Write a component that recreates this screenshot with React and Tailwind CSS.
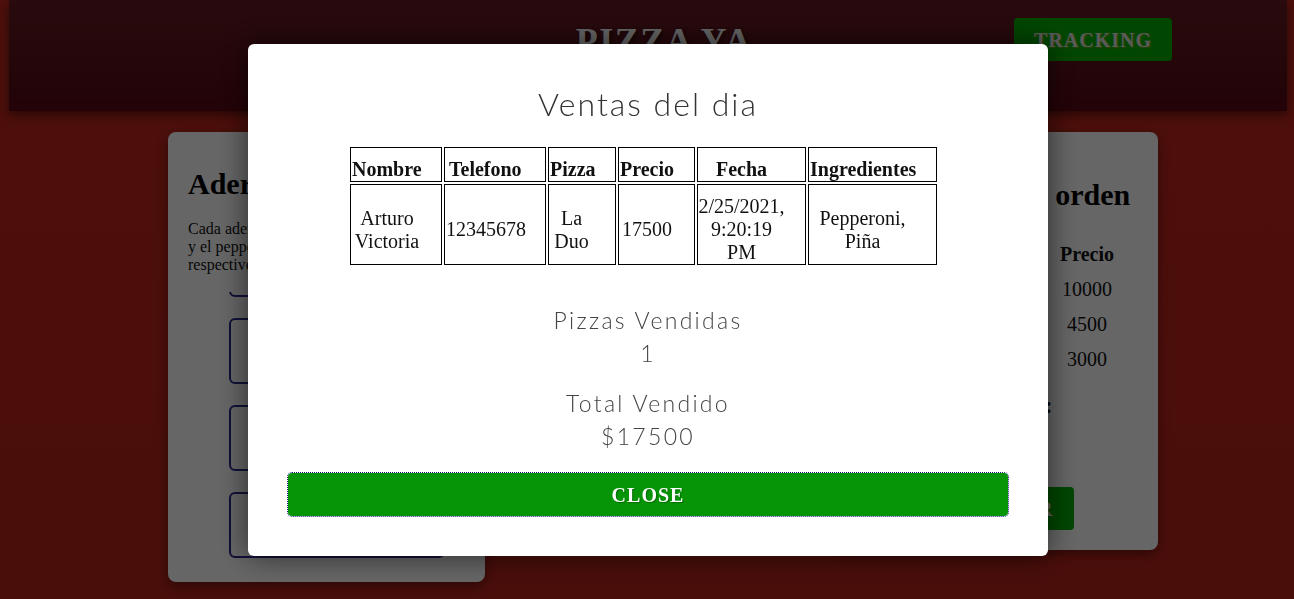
import React from "react";

const ventas = [
  {
    nombre: "Arturo Victoria",
    telefono: "12345678",
    pizza: "La Duo",
    precio: 17500,
    fecha: "2/25/2021, 9:20:19 PM",
    ingredientes: "Pepperoni, Piña",
  },
];

const aderezos = ["+ $1500", "+ $2000", "+ $1000", "+ $3000"];

const resumen = [
  { item: "Pizza", precio: 10000 },
  { item: "Pepperoni", precio: 4500 },
  { item: "Piña", precio: 3000 },
];

function Header() {
  return (
    <header className="ml-[9px] mr-[7px] h-[111px] bg-gradient-to-b from-[#661c24] to-[#560712] shadow-[0_4px_10px_rgba(0,0,0,0.5)] flex items-start">
      <div className="flex-1 flex justify-center pt-[14px] pl-[305px]">
        <h1 className="text-[36px] font-bold tracking-[1.5px] text-white [text-shadow:2px_2px_4px_rgba(0,0,0,0.6)]">
          PIZZA YA
        </h1>
      </div>
      <button className="mt-[18px] mr-[115px] h-[43px] px-5 rounded bg-[#04b004] text-[20px] font-bold tracking-[1px] text-[#e2e2e2] [text-shadow:1px_1px_2px_rgba(200,160,40,0.7)]">
        TRACKING
      </button>
    </header>
  );
}

function AderezosCard() {
  return (
    <section className="w-[317px] h-[450px] bg-white rounded-lg shadow-[0_4px_12px_rgba(0,0,0,0.4)] px-5 pt-[34px]">
      <h2 className="text-[30px] font-bold text-black leading-[36px]">Aderezos</h2>
      <p className="mt-[18px] text-[16px] leading-[18px] text-[#111] whitespace-nowrap">
        Cada aderezo tiene un costo adicional,
        <br />
        y el pepperoni y la piña se cobran con su
        <br />
        respectivo precio.
      </p>
      <div className="mt-[18px] h-[270px] overflow-hidden">
        <div className="-mt-[61px] ml-[41px] flex flex-col gap-[21px]">
          {aderezos.map((a) => (
            <div
              key={a}
              className="w-[216px] h-[66px] border-2 border-[#2b2b8f] rounded-md flex items-center pl-[18px] text-[14px] text-[#e0b83a]"
            >
              {a}
            </div>
          ))}
        </div>
      </div>
    </section>
  );
}

function OrdenCard() {
  return (
    <section className="w-[317px] h-[418px] bg-white rounded-lg shadow-[0_4px_12px_rgba(0,0,0,0.4)] px-5 pt-[45px] flex flex-col">
      <h2 className="text-[30px] font-bold text-black leading-[36px] whitespace-nowrap">
        Resumen de la orden
      </h2>
      <div className="mt-[24px] grid grid-cols-[1fr_102px] text-[20px] leading-[35px] text-[#111]">
        <div className="font-bold">Producto</div>
        <div className="font-bold text-center">Precio</div>
        {resumen.map((r) => (
          <React.Fragment key={r.item}>
            <div>{r.item}</div>
            <div className="text-center">{r.precio}</div>
          </React.Fragment>
        ))}
      </div>
      <div className="mt-[15px] text-[23px] leading-[27px] font-bold text-black whitespace-nowrap">
        Total de la compra:
      </div>
      <div className="mt-[68px] flex justify-center">
        <button className="h-[43px] px-5 rounded bg-[#04b004] text-[20px] font-bold tracking-[1px] text-white">
          ORDENAR
        </button>
      </div>
    </section>
  );
}

function VentasModal() {
  const th = "border border-black pt-[10px] pb-0 leading-[23px] font-bold text-left align-middle";
  const td = "border border-black pt-[10px] pb-0 leading-[23px] align-middle";
  return (
    <div className="fixed inset-0 bg-black/60">
      <div className="absolute top-[44px] left-[248px] w-[800px] bg-white rounded-md shadow-[0_0_30px_rgba(0,0,0,0.6)] px-10 pt-[30px] pb-10">
        <h2 className="text-center text-[32px] font-light tracking-[2px] leading-[60px] text-[#333] font-['Lato','Open_Sans',sans-serif]">
          Ventas del dia
        </h2>
        <table className="mt-[11px] ml-[60px] w-[591px] table-fixed border-separate border-spacing-[2px] text-[20px] text-[#111] font-['Liberation_Serif','Times_New_Roman',serif]">
          <thead>
            <tr>
              <th className={`${th} w-[92px] pl-[1px]`}>Nombre</th>
              <th className={`${th} w-[102px] pl-[4px]`}>Telefono</th>
              <th className={`${th} w-[68px] pl-[1px]`}>Pizza</th>
              <th className={`${th} w-[77px] pl-[1px]`}>Precio</th>
              <th className={`${th} w-[109px] !text-center pr-[20px]`}>Fecha</th>
              <th className={`${th} w-[129px] pl-[1px]`}>Ingredientes</th>
            </tr>
          </thead>
          <tbody>
            {ventas.map((v) => (
              <tr key={v.telefono}>
                <td className={`${td} text-center pr-[18px]`}>{v.nombre}</td>
                <td className={`${td} pl-[1px]`}>{v.telefono}</td>
                <td className={`${td} text-center pr-[21px]`}>{v.pizza}</td>
                <td className={`${td} pl-[3px]`}>{v.precio}</td>
                <td className={`${td} text-center pr-[20px]`}>{v.fecha}</td>
                <td className={`${td} text-center pr-[20px]`}>{v.ingredientes}</td>
              </tr>
            ))}
          </tbody>
        </table>
        <div className="mt-[37px] text-center text-[23px] font-light tracking-[2.3px] leading-[33px] text-[#444] font-['Lato','Open_Sans',sans-serif]">
          <p>Pizzas Vendidas</p>
          <p>1</p>
          <p className="mt-[17px]">Total Vendido</p>
          <p>$17500</p>
        </div>
        <button className="mt-[20px] w-full h-[43px] rounded bg-[#069506] outline outline-1 outline-dotted outline-[#1a1a80] text-[20px] font-bold tracking-[1px] text-white [text-shadow:1px_1px_1px_rgba(0,0,0,0.3)]">
          CLOSE
        </button>
      </div>
    </div>
  );
}

export default function App() {
  return (
    <div className="min-h-screen bg-gradient-to-b from-[#c2271c] to-[#b8231a] font-['Liberation_Serif','Times_New_Roman',serif] overflow-hidden">
      <Header />
      <main className="mt-[21px] pl-[168px] flex items-start">
        <AderezosCard />
        <div className="w-[356px]" />
        <OrdenCard />
      </main>
      <VentasModal />
    </div>
  );
}
